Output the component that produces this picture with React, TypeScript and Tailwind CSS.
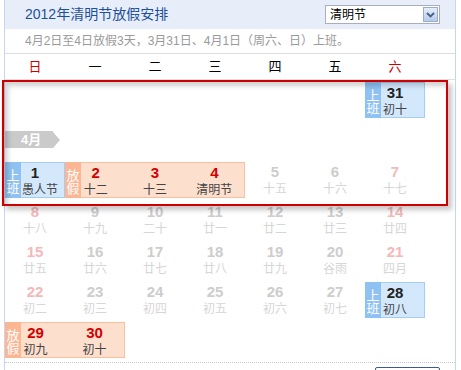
import React from "react";

const FONT = { fontFamily: '"Liberation Sans", Arial, "Noto Sans CJK SC", sans-serif' };

type Kind = "faded" | "work" | "holiday";
type Day = { n: number; l: string; weekend?: boolean; shift?: string };

function Cell({ d, kind }: { d: Day; kind: Kind }) {
  const num =
    kind === "faded"
      ? d.weekend
        ? "text-[#f3b9b9]"
        : "text-[#cdcdcd]"
      : kind === "holiday"
      ? "text-[#d20000]"
      : "text-[#222]";
  const lun = kind === "faded" ? "text-[#d6d6d6]" : "text-[#444]";
  return (
    <div className="w-[60px] h-[36px] flex flex-col items-center pt-[1px]">
      <div className={`text-[15px] font-bold leading-[18px] ${num}`}>{d.n}</div>
      <div className={`text-[12px] leading-[17px] ${lun} ${d.shift ?? ""}`}>{d.l}</div>
    </div>
  );
}

function Block({ days, kind, span }: { days: Day[]; kind: "work" | "holiday"; span: string }) {
  const box =
    kind === "work"
      ? "bg-[#d4e8fc] border-[#a3cdf3]"
      : "bg-[#fddfce] border-[#f8c0a0]";
  const lab = kind === "work" ? "bg-[#8fc2f2]" : "bg-[#fcb694]";
  return (
    <div className={`${span} relative h-[36px] self-center flex border ${box}`}>
      {days.map((d) => (
        <Cell key={d.n} d={d} kind={kind} />
      ))}
      <div
        className={`absolute left-[-1px] top-[-1px] bottom-[-1px] w-[16px] ${lab} flex flex-col items-center justify-center pt-[3px] text-white text-[13px] leading-[13px]`}
      >
        <span>{kind === "work" ? "上" : "放"}</span>
        <span>{kind === "work" ? "班" : "假"}</span>
      </div>
    </div>
  );
}

function FadedRow({ days }: { days: Day[] }) {
  return (
    <div className="grid grid-cols-[repeat(7,60px)] h-[40px] items-center">
      {days.map((d) => (
        <Cell key={d.n} d={d} kind="faded" />
      ))}
    </div>
  );
}

export default function App() {
  const weekdays = ["日", "一", "二", "三", "四", "五", "六"];
  return (
    <div className="relative w-[461px] h-[370px] overflow-hidden bg-white" style={FONT}>
      <div className="ml-[4px] w-[452px] h-full border-x border-[#c6d6f0]">
        {/* header */}
        <div className="h-[29px] bg-[#e7eef9] flex items-center justify-between pl-[20px] pr-[15px]">
          <div className="text-[14px] text-[#1d4f9c]">2012年清明节放假安排</div>
          <div className="w-[115px] h-[19px] border border-[#a9afb8] bg-white flex items-center justify-between pl-[4px] pr-[1px]">
            <span className="text-[12px] text-black leading-none">清明节</span>
            <div className="w-[15px] h-[15px] border border-[#98aed0] bg-gradient-to-b from-[#e6eefa] to-[#b7cbe8] flex items-center justify-center">
              <svg width="9" height="6" viewBox="0 0 9 6">
                <path d="M1 1 L4.5 4.5 L8 1" fill="none" stroke="#4a5f86" strokeWidth="1.8" />
              </svg>
            </div>
          </div>
        </div>
        {/* subtitle */}
        <div className="h-[25px] border-b border-[#dedede] pl-[20px] flex items-center text-[12px] text-[#9a9a9a]">
          4月2日至4日放假3天，3月31日、4月1日（周六、日）上班。
        </div>
        {/* weekdays */}
        <div className="h-[26px] border-b border-[#e0e0e0] grid grid-cols-[repeat(7,60px)] items-center">
          {weekdays.map((w, i) => (
            <div
              key={w}
              className={`text-center text-[13px] ${i === 0 || i === 6 ? "text-[#cc0000]" : "text-black"}`}
            >
              {w}
            </div>
          ))}
        </div>
        {/* body */}
        <div className="w-[420px]">
          <div className="grid grid-cols-[repeat(7,60px)] h-[40px] items-center">
            <Block span="col-start-7" kind="work" days={[{ n: 31, l: "初十" }]} />
          </div>
          <div className="h-[40px] flex items-center">
            <div className="flex items-center h-[17px] mt-[-1px]">
              <div className="w-[48px] h-[17px] bg-[#cacaca] text-white text-[13px] font-bold leading-[17px] pl-[16px]">
                4月
              </div>
              <div className="w-0 h-0 border-y-[8.5px] border-y-transparent border-l-[7px] border-l-[#cacaca]" />
            </div>
          </div>
          <div className="grid grid-cols-[repeat(7,60px)] h-[40px] items-center">
            <Block span="col-start-1" kind="work" days={[{ n: 1, l: "愚人节", shift: "translate-x-[5px]" }]} />
            <Block
              span="col-span-3"
              kind="holiday"
              days={[
                { n: 2, l: "十二" },
                { n: 3, l: "十三" },
                { n: 4, l: "清明节" },
              ]}
            />
            <Cell d={{ n: 5, l: "十五" }} kind="faded" />
            <Cell d={{ n: 6, l: "十六" }} kind="faded" />
            <Cell d={{ n: 7, l: "十七", weekend: true }} kind="faded" />
          </div>
          <FadedRow
            days={[
              { n: 8, l: "十八", weekend: true },
              { n: 9, l: "十九" },
              { n: 10, l: "二十" },
              { n: 11, l: "廿一" },
              { n: 12, l: "廿二" },
              { n: 13, l: "廿三" },
              { n: 14, l: "廿四", weekend: true },
            ]}
          />
          <FadedRow
            days={[
              { n: 15, l: "廿五", weekend: true },
              { n: 16, l: "廿六" },
              { n: 17, l: "廿七" },
              { n: 18, l: "廿八" },
              { n: 19, l: "廿九" },
              { n: 20, l: "谷雨" },
              { n: 21, l: "四月", weekend: true },
            ]}
          />
          <div className="grid grid-cols-[repeat(7,60px)] h-[40px] items-center">
            <Cell d={{ n: 22, l: "初二", weekend: true }} kind="faded" />
            <Cell d={{ n: 23, l: "初三" }} kind="faded" />
            <Cell d={{ n: 24, l: "初四" }} kind="faded" />
            <Cell d={{ n: 25, l: "初五" }} kind="faded" />
            <Cell d={{ n: 26, l: "初六" }} kind="faded" />
            <Cell d={{ n: 27, l: "初七" }} kind="faded" />
            <Block span="col-start-7" kind="work" days={[{ n: 28, l: "初八" }]} />
          </div>
          <div className="grid grid-cols-[repeat(7,60px)] h-[40px] items-center">
            <Block
              span="col-span-2"
              kind="holiday"
              days={[
                { n: 29, l: "初九" },
                { n: 30, l: "初十" },
              ]}
            />
          </div>
        </div>
        <div className="mt-[2px] border-t border-dotted border-[#c8c8c8]" />
        <div className="flex justify-end pr-[15px] mt-[4px]">
          <div className="w-[65px] h-[10px] border border-[#3b5b8c] rounded-t-[2px]" />
        </div>
      </div>
      {/* highlight overlay */}
      <div className="absolute left-[2px] top-[80px] w-[446px] h-[126px] border-2 border-[#cc0000] shadow-[inset_4px_4px_5px_rgba(0,0,0,0.18),4px_4px_5px_rgba(0,0,0,0.22)] pointer-events-none" />
    </div>
  );
}
